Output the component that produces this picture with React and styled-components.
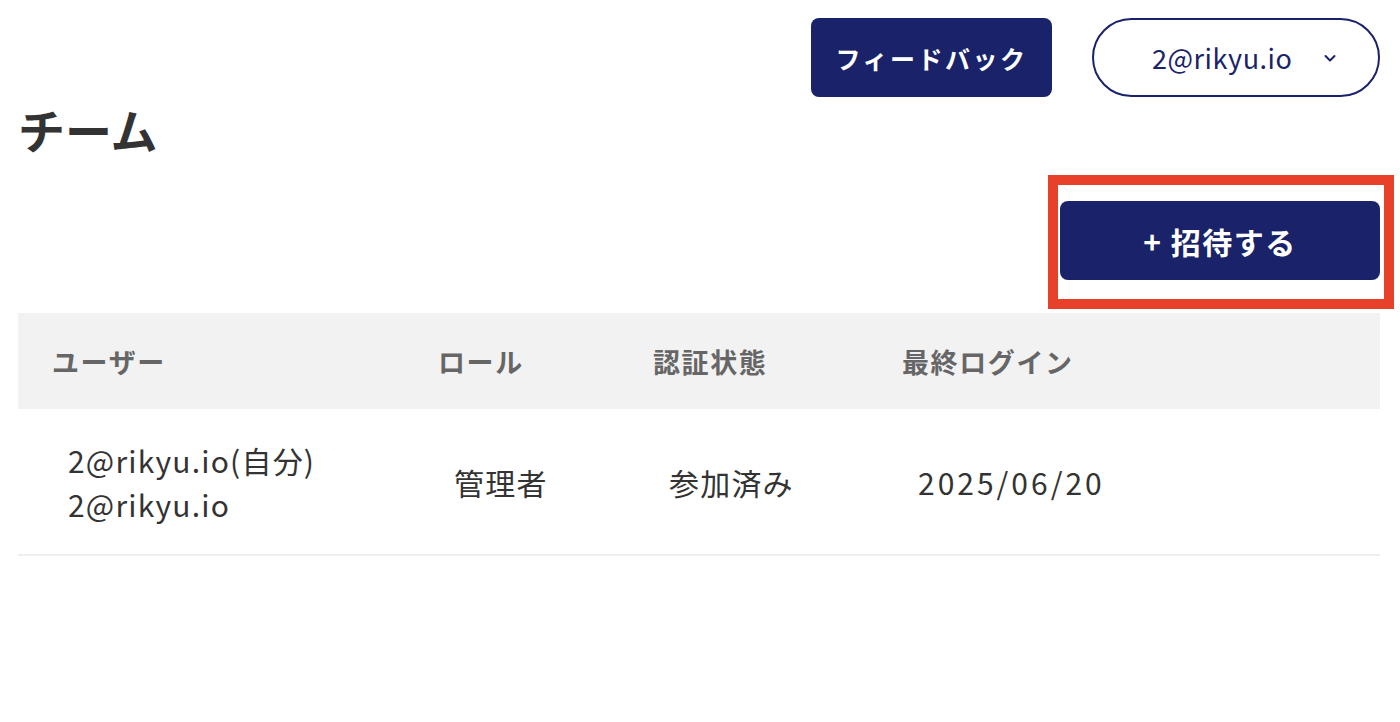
import styled, { createGlobalStyle } from "styled-components";

const GlobalStyle = createGlobalStyle`
  body {
    margin: 0;
    background: #ffffff;
    font-family: "Noto Sans CJK JP", "Noto Sans", sans-serif;
    color: #333333;
  }
`;

const members = [
  {
    name: "2@rikyu.io(自分)",
    email: "2@rikyu.io",
    role: "管理者",
    status: "参加済み",
    lastLogin: "2025/06/20",
  },
];

export default function App() {
  return (
    <>
      <GlobalStyle />
      <StyledPage>
        <StyledTopBar>
          <StyledFeedbackButton>フィードバック</StyledFeedbackButton>
          <StyledAccountButton>
            <span>2@rikyu.io</span>
            <svg width="16" height="16" viewBox="0 0 16 16" aria-hidden="true">
              <path
                d="M3.5 6 L8 10.5 L12.5 6"
                fill="none"
                stroke="#1a2369"
                strokeWidth="2"
                strokeLinecap="round"
                strokeLinejoin="round"
              />
            </svg>
          </StyledAccountButton>
        </StyledTopBar>

        <StyledTitle>チーム</StyledTitle>

        <StyledActionRow>
          <StyledHighlight>
            <StyledInviteButton>+ 招待する</StyledInviteButton>
          </StyledHighlight>
        </StyledActionRow>

        <StyledTable>
          <StyledHeaderRow>
            <StyledHeaderCell>ユーザー</StyledHeaderCell>
            <StyledHeaderCell>ロール</StyledHeaderCell>
            <StyledHeaderCell>認証状態</StyledHeaderCell>
            <StyledHeaderCell>最終ログイン</StyledHeaderCell>
          </StyledHeaderRow>
          {members.map((member) => (
            <StyledRow key={member.email}>
              <StyledCell>
                <StyledLine>{member.name}</StyledLine>
                <StyledLine>{member.email}</StyledLine>
              </StyledCell>
              <StyledCell>{member.role}</StyledCell>
              <StyledCell>{member.status}</StyledCell>
              <StyledCell $numeric>{member.lastLogin}</StyledCell>
            </StyledRow>
          ))}
        </StyledTable>
      </StyledPage>
    </>
  );
}

const navy = "#1a2369";

const StyledPage = styled.main`
  padding: 18px 20px 0 18px;
`;

const StyledTopBar = styled.header`
  display: flex;
  justify-content: flex-end;
  gap: 40px;
`;

const StyledFeedbackButton = styled.button`
  width: 241px;
  height: 79px;
  border: none;
  border-radius: 8px;
  background-color: ${navy};
  color: #ffffff;
  font-family: inherit;
  font-size: 25px;
  font-weight: 700;
  letter-spacing: 0.1em;
  cursor: pointer;
`;

const StyledAccountButton = styled.button`
  width: 288px;
  height: 79px;
  box-sizing: border-box;
  border: 2px solid ${navy};
  border-radius: 40px;
  background: #ffffff;
  color: ${navy};
  font-family: inherit;
  font-size: 27px;
  letter-spacing: 0.02em;
  display: flex;
  align-items: center;
  justify-content: space-between;
  padding: 0 40px 0 58px;
  cursor: pointer;
`;

const StyledTitle = styled.h1`
  margin: 0;
  font-size: 47px;
  font-weight: 700;
  line-height: 64px;
  color: #333333;
`;

const StyledActionRow = styled.div`
  display: flex;
  justify-content: flex-end;
  margin-top: 14px;
`;

const StyledHighlight = styled.div`
  border: 10px solid #e8412a;
  padding: 16px 4px 19px 2px;
  margin-right: -14px;
`;

const StyledInviteButton = styled.button`
  display: block;
  width: 320px;
  height: 79px;
  border: none;
  border-radius: 8px;
  background-color: ${navy};
  color: #ffffff;
  font-family: inherit;
  font-size: 30px;
  font-weight: 700;
  letter-spacing: 0.05em;
  cursor: pointer;
`;

const StyledTable = styled.section`
  margin-top: 4px;
`;

const columns = "386px 215px 249px 1fr";

const StyledHeaderRow = styled.div`
  display: grid;
  grid-template-columns: ${columns};
  align-items: center;
  height: 96px;
  background-color: #f2f2f2;
`;

const StyledHeaderCell = styled.div`
  padding-left: 34px;
  font-size: 27px;
  font-weight: 700;
  color: #666666;
  letter-spacing: 0.06em;
`;

const StyledRow = styled.div`
  display: grid;
  grid-template-columns: ${columns};
  align-items: center;
  height: 145px;
  border-bottom: 2px solid #eeeeee;
`;

const StyledCell = styled.div`
  padding-left: 50px;
  font-size: 30px;
  line-height: 44px;
  color: #333333;
  letter-spacing: ${({ $numeric }) => ($numeric ? "0.1em" : "0.04em")};
`;

const StyledLine = styled.div`
  white-space: nowrap;
`;
